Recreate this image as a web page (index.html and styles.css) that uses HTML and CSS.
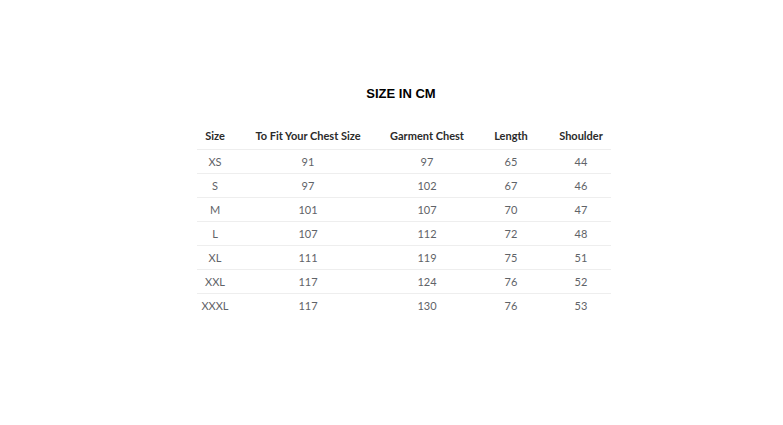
FILE: index.html
```html
<!DOCTYPE html>
<html>
<head>
<meta charset="utf-8">
<link rel="stylesheet" href="styles.css">
</head>
<body>
<div class="page">
  <div class="chart">
    <h2 class="title">SIZE IN CM</h2>
    <table class="sizes">
      <colgroup>
        <col class="c1"><col class="c2"><col class="c3"><col class="c4"><col class="c5">
      </colgroup>
      <thead>
        <tr><th>Size</th><th>To Fit Your Chest Size</th><th>Garment Chest</th><th>Length</th><th>Shoulder</th></tr>
      </thead>
      <tbody>
        <tr><td>XS</td><td>91</td><td>97</td><td>65</td><td>44</td></tr>
        <tr><td>S</td><td>97</td><td>102</td><td>67</td><td>46</td></tr>
        <tr><td>M</td><td>101</td><td>107</td><td>70</td><td>47</td></tr>
        <tr><td>L</td><td>107</td><td>112</td><td>72</td><td>48</td></tr>
        <tr><td>XL</td><td>111</td><td>119</td><td>75</td><td>51</td></tr>
        <tr><td>XXL</td><td>117</td><td>124</td><td>76</td><td>52</td></tr>
        <tr><td>XXXL</td><td>117</td><td>130</td><td>76</td><td>53</td></tr>
      </tbody>
    </table>
  </div>
</div>
</body>
</html>
```
FILE: styles.css
```css
html, body {
  margin: 0;
  padding: 0;
  background: #fff;
}
.page {
  width: 783px;
  height: 425px;
  display: flex;
  justify-content: center;
  padding-left: 25px;
  box-sizing: border-box;
}
.chart {
  padding-top: 86px;
  width: 414px;
}
.title {
  margin: 0 0 20px 0;
  padding-right: 6px;
  font-family: "Liberation Sans", Arial, sans-serif;
  font-weight: bold;
  font-size: 13px;
  line-height: 15px;
  text-align: center;
  color: #000;
}
.sizes {
  width: 414px;
  table-layout: fixed;
  border-collapse: collapse;
  font-family: Lato, "Open Sans", sans-serif;
  font-size: 11px;
}
.c1 { width: 36px; }
.c2 { width: 150px; }
.c3 { width: 88px; }
.c4 { width: 80px; }
.c5 { width: 60px; }
.sizes th {
  height: 28px;
  padding: 0;
  text-align: center;
  font-weight: bold;
  color: #2b2b2b;
  white-space: nowrap;
}
.sizes td {
  height: 23px;
  padding: 0;
  text-align: center;
  color: #5f6368;
  border-top: 1px solid #eee;
}
```
